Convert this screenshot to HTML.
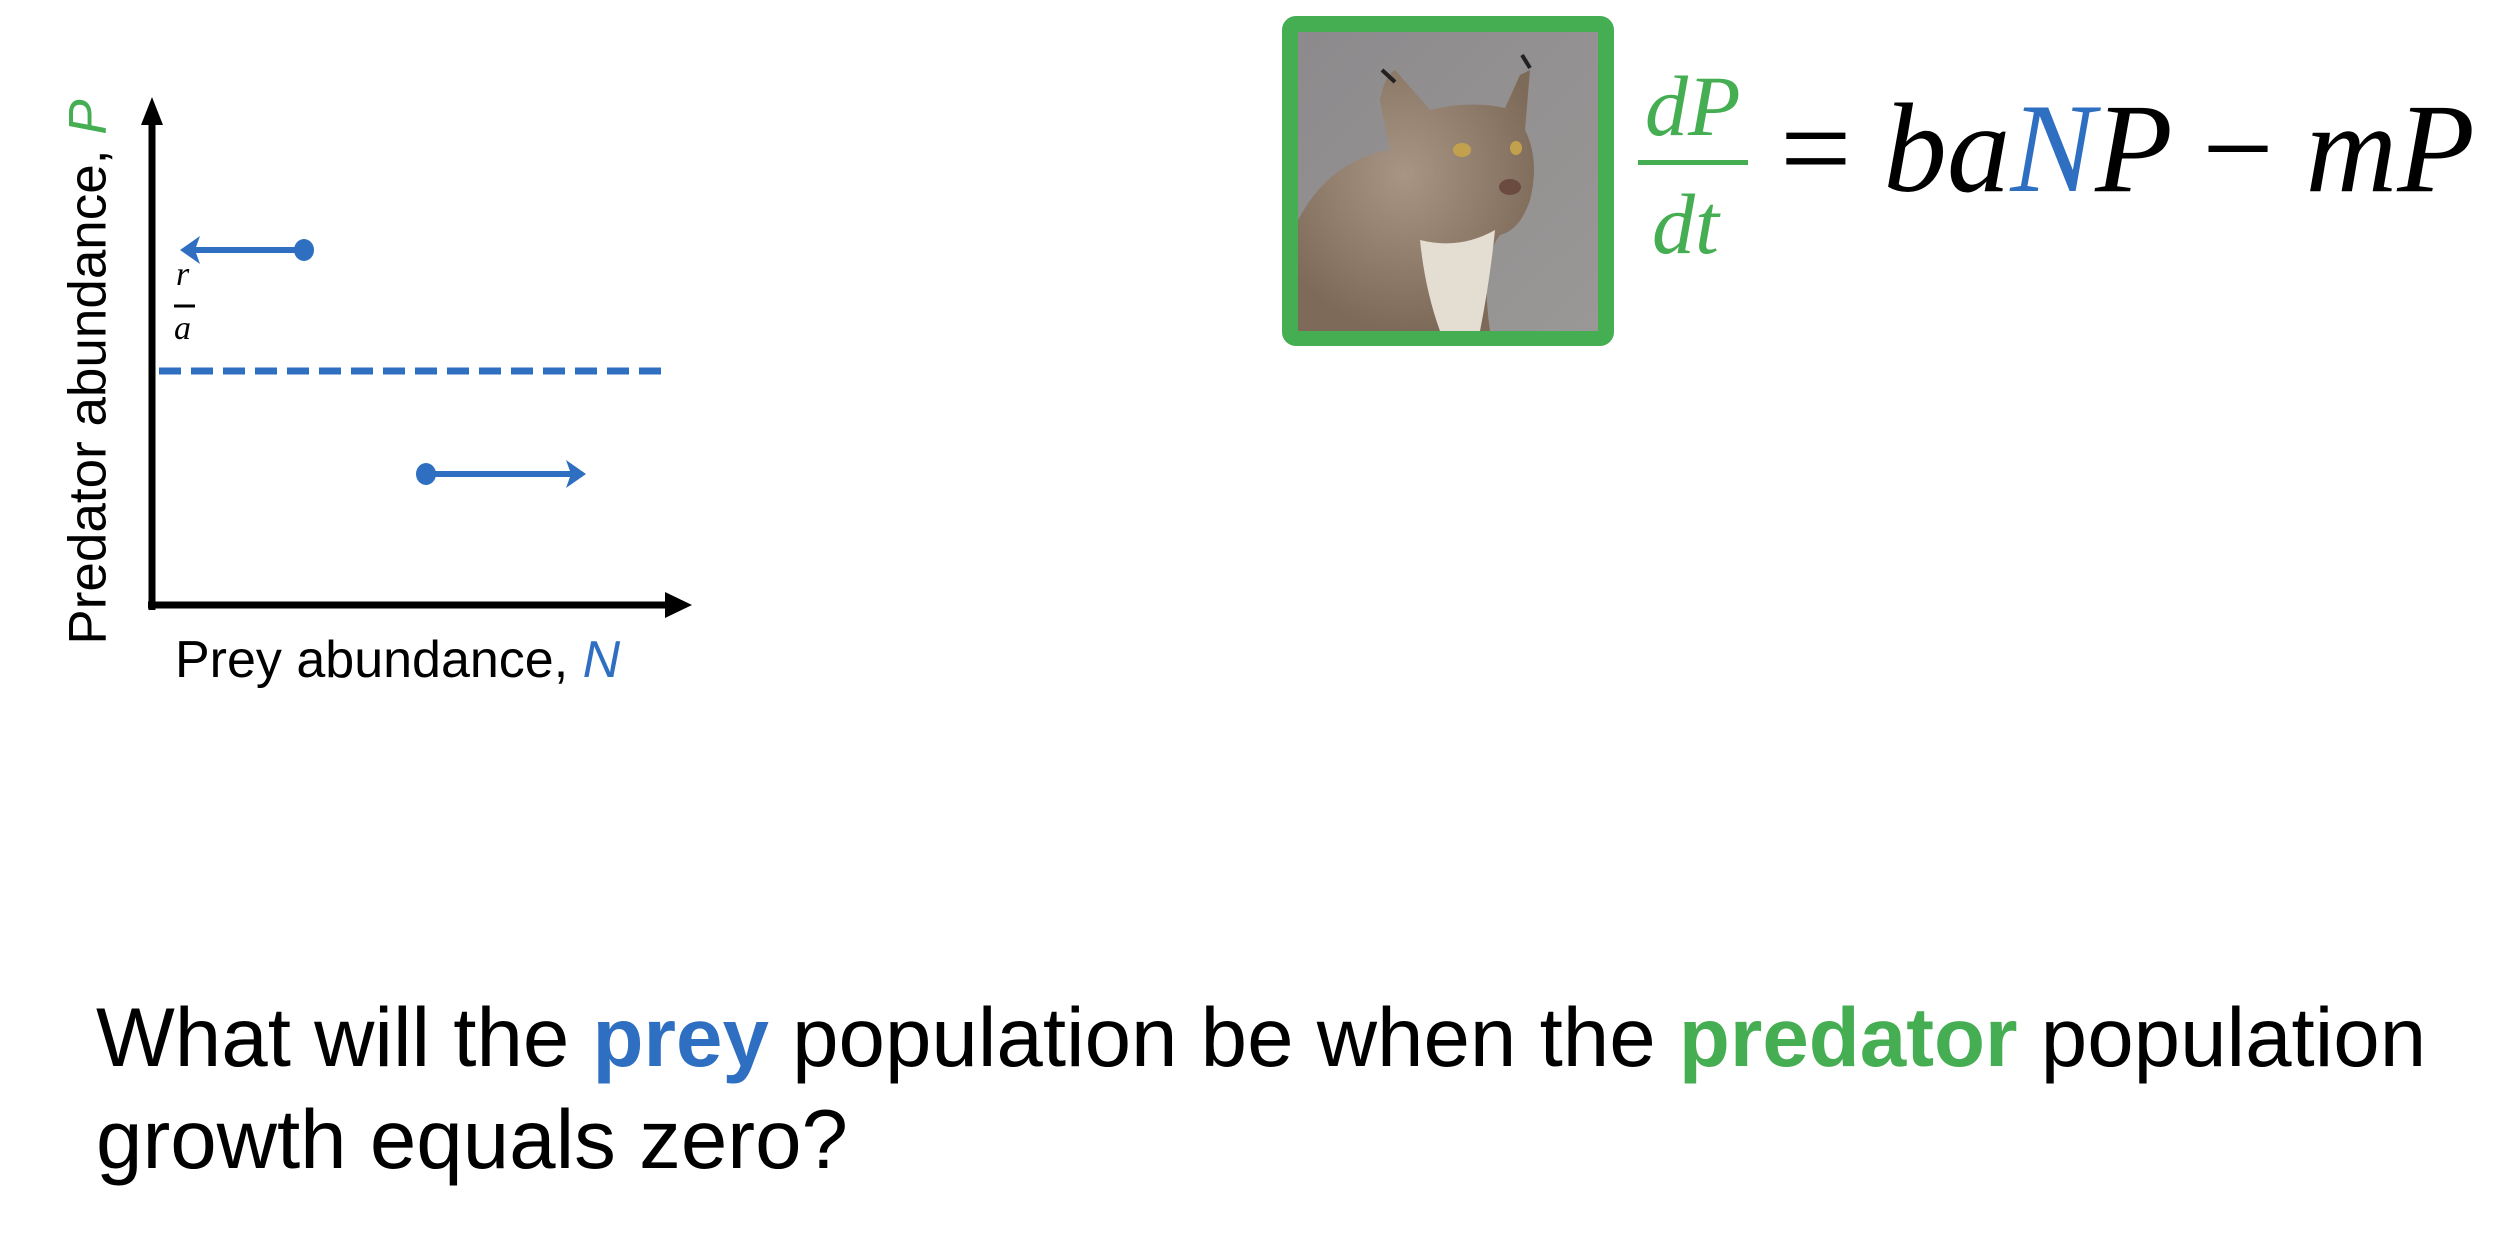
<!DOCTYPE html>
<html><head><meta charset="utf-8"><style>
html,body{margin:0;padding:0;background:#fff;}
body{width:2498px;height:1248px;position:relative;overflow:hidden;font-family:"Liberation Sans",sans-serif;}
.q{position:absolute;left:96px;font-size:83.5px;line-height:1;white-space:nowrap;color:#000;}
.b{color:#2F6FC2;font-weight:bold;}
.g{color:#45AD52;font-weight:bold;}
.m{position:absolute;font-family:"Liberation Serif",serif;font-style:italic;white-space:nowrap;line-height:1;}
</style></head><body>
<svg width="2498" height="1248" style="position:absolute;left:0;top:0">
 <line x1="152" y1="120" x2="152" y2="610" stroke="#000" stroke-width="7"/>
 <polygon points="152,97 141,125 163,125" fill="#000"/>
 <line x1="148" y1="605" x2="670" y2="605" stroke="#000" stroke-width="7"/>
 <polygon points="692,605 665,592 665,618" fill="#000"/>
 <line x1="159" y1="371" x2="666" y2="371" stroke="#2F6FC2" stroke-width="7" stroke-dasharray="22,10"/>
 <line x1="190" y1="250" x2="303" y2="250" stroke="#2F6FC2" stroke-width="6"/>
 <polygon points="180,250 200,236 195,250 200,264" fill="#2F6FC2"/>
 <ellipse cx="304" cy="250" rx="10" ry="11" fill="#2F6FC2"/>
 <line x1="424" y1="474" x2="575" y2="474" stroke="#2F6FC2" stroke-width="6"/>
 <polygon points="586,474 566,460 571,474 566,488" fill="#2F6FC2"/>
 <ellipse cx="426" cy="474" rx="10" ry="11" fill="#2F6FC2"/>
 <line x1="174" y1="306" x2="195" y2="306" stroke="#000" stroke-width="3"/>
 <rect x="1290" y="24" width="316" height="314" rx="6" fill="none" stroke="#45AD52" stroke-width="16"/>
 <defs>
  <linearGradient id="bg" x1="0" y1="0" x2="1" y2="1"><stop offset="0" stop-color="#8c8a8c"/><stop offset="1" stop-color="#9a9896"/></linearGradient>
  <radialGradient id="fur" cx="0.45" cy="0.4" r="0.6"><stop offset="0" stop-color="#a89684"/><stop offset="1" stop-color="#7e6a58"/></radialGradient>
 </defs>
 <rect x="1298" y="32" width="300" height="299" fill="url(#bg)"/>
 <path d="M1298,220 Q1330,160 1390,150 L1380,100 Q1385,75 1395,70 L1430,110 Q1470,100 1505,108 L1520,75 L1530,70 L1525,130 Q1540,160 1530,200 Q1520,230 1500,235 Q1480,260 1490,331 L1298,331 Z" fill="url(#fur)"/>
 <path d="M1420,240 Q1460,250 1495,230 Q1490,280 1480,331 L1440,331 Q1425,290 1420,240 Z" fill="#e4ddd2"/>
 <ellipse cx="1462" cy="150" rx="9" ry="7" fill="#c2a14e"/>
 <ellipse cx="1516" cy="148" rx="6" ry="7" fill="#c2a14e"/>
 <ellipse cx="1510" cy="187" rx="11" ry="8" fill="#6b4a40"/>
 <path d="M1382,70 L1395,82 M1522,55 L1530,68" stroke="#222" stroke-width="4"/>
</svg>
<div style="position:absolute;left:88px;top:372px;width:0;height:0;">
 <div style="position:absolute;transform:translate(-50%,-50%) rotate(-90deg);font-size:53px;white-space:nowrap;">Predator abundance, <i style="color:#45AD52">P</i></div>
</div>
<div style="position:absolute;left:175px;top:630px;font-size:52px;white-space:nowrap;">Prey abundance, <i style="color:#2F6FC2">N</i></div>
<div class="m" style="left:176px;top:258px;font-size:34px;">r</div>
<div class="m" style="left:174px;top:312px;font-size:34px;">a</div>
<div class="m" style="left:1645px;top:63px;font-size:86px;color:#45AD52;">dP</div>
<div style="position:absolute;left:1638px;top:160px;width:110px;height:5px;background:#45AD52;"></div>
<div class="m" style="left:1652px;top:181px;font-size:86px;color:#45AD52;">dt</div>
<div class="m" style="left:1780px;top:86px;font-size:127px;color:#000;"><span style="font-style:normal">=</span> ba<span style="color:#2F6FC2">N</span>P <span style="font-style:normal">−</span> mP</div>
<div class="q" style="top:996px;">What will the <span class="b">prey</span> population be when the <span class="g">predator</span> population</div>
<div class="q" style="top:1098px;">growth equals zero?</div>
</body></html>
